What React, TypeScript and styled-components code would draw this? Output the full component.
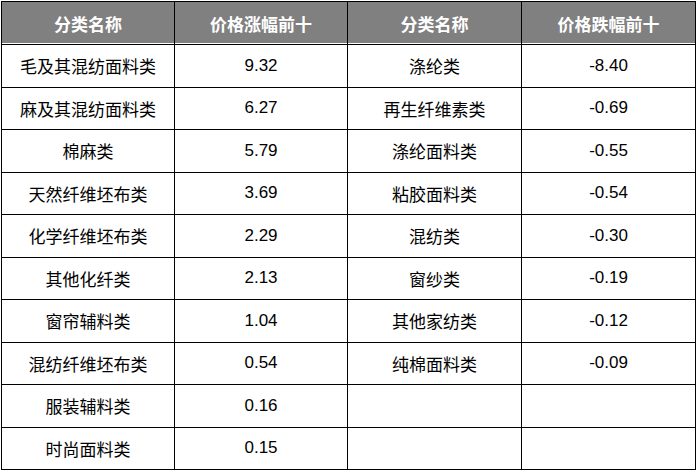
import { createGlobalStyle, styled } from "styled-components";

interface RowData {
  upName: string;
  upValue: string;
  downName: string;
  downValue: string;
}

const rows: RowData[] = [
  { upName: "毛及其混纺面料类", upValue: "9.32", downName: "涤纶类", downValue: "-8.40" },
  { upName: "麻及其混纺面料类", upValue: "6.27", downName: "再生纤维素类", downValue: "-0.69" },
  { upName: "棉麻类", upValue: "5.79", downName: "涤纶面料类", downValue: "-0.55" },
  { upName: "天然纤维坯布类", upValue: "3.69", downName: "粘胶面料类", downValue: "-0.54" },
  { upName: "化学纤维坯布类", upValue: "2.29", downName: "混纺类", downValue: "-0.30" },
  { upName: "其他化纤类", upValue: "2.13", downName: "窗纱类", downValue: "-0.19" },
  { upName: "窗帘辅料类", upValue: "1.04", downName: "其他家纺类", downValue: "-0.12" },
  { upName: "混纺纤维坯布类", upValue: "0.54", downName: "纯棉面料类", downValue: "-0.09" },
  { upName: "服装辅料类", upValue: "0.16", downName: "", downValue: "" },
  { upName: "时尚面料类", upValue: "0.15", downName: "", downValue: "" },
];

const GlobalStyle = createGlobalStyle`
  body {
    margin: 0;
    background: #ffffff;
    font-family: "Liberation Sans", "Noto Sans CJK SC", sans-serif;
  }
`;

const Page = styled.div`
  padding: 1px 0 0 1px;
`;

const Table = styled.table`
  width: 694px;
  border-collapse: collapse;
  table-layout: fixed;
  border: 1px solid #000000;
`;

const HeadCell = styled.th`
  height: 42px;
  padding: 0;
  background: #808080;
  color: #ffffff;
  font-size: 17px;
  font-weight: bold;
  text-align: center;
  vertical-align: middle;
  border: 1px solid #000000;
  box-shadow: inset 0 -1px 0 #ffffff;
`;

const Cell = styled.td`
  height: 41.5px;
  padding: 0;
  color: #000000;
  font-size: 17px;
  text-align: center;
  vertical-align: middle;
  border: 1px solid #000000;
`;

export default function App() {
  return (
    <Page>
      <GlobalStyle />
      <Table>
        <colgroup>
          <col style={{ width: "173px" }} />
          <col style={{ width: "173px" }} />
          <col style={{ width: "174px" }} />
          <col style={{ width: "174px" }} />
        </colgroup>
        <thead>
          <tr>
            <HeadCell>分类名称</HeadCell>
            <HeadCell>价格涨幅前十</HeadCell>
            <HeadCell>分类名称</HeadCell>
            <HeadCell>价格跌幅前十</HeadCell>
          </tr>
        </thead>
        <tbody>
          {rows.map((row) => (
            <tr key={row.upName}>
              <Cell>{row.upName}</Cell>
              <Cell>{row.upValue}</Cell>
              <Cell>{row.downName}</Cell>
              <Cell>{row.downValue}</Cell>
            </tr>
          ))}
        </tbody>
      </Table>
    </Page>
  );
}
